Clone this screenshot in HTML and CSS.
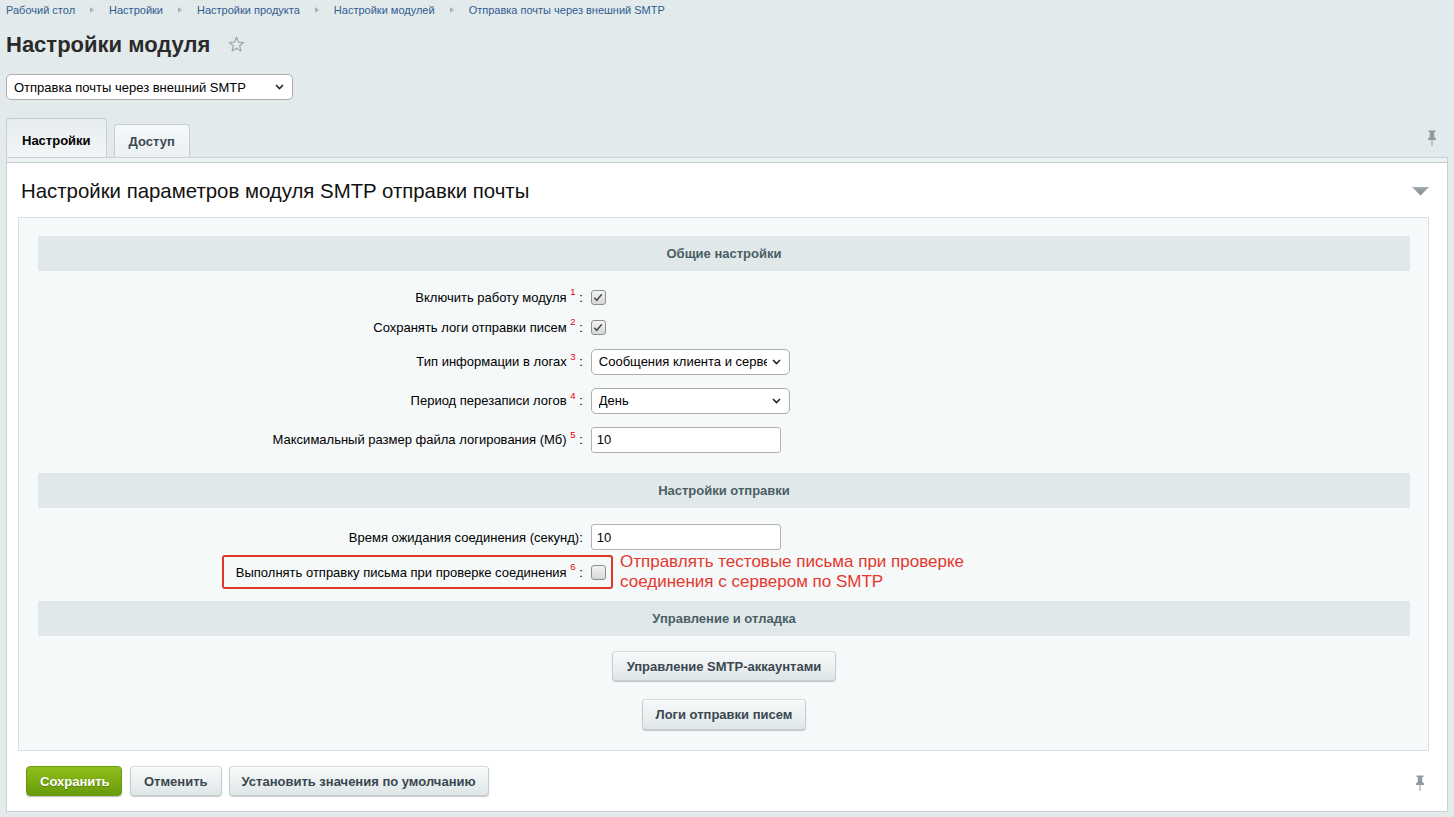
FILE: index.html
```html
<!DOCTYPE html>
<html lang="ru">
<head>
<meta charset="utf-8">
<title>Настройки модуля</title>
<link rel="stylesheet" href="styles.css">
</head>
<body>
<div class="page">
  <nav class="breadcrumbs">
    <a href="#">Рабочий стол</a><span class="crumb-sep"></span>
    <a href="#">Настройки</a><span class="crumb-sep"></span>
    <a href="#">Настройки продукта</a><span class="crumb-sep"></span>
    <a href="#">Настройки модулей</a><span class="crumb-sep"></span>
    <a href="#">Отправка почты через внешний SMTP</a>
  </nav>

  <h1 class="page-title">Настройки модуля
    <svg class="star" width="17" height="17" viewBox="0 0 17 17"><path d="M8.5 1.3 L10.5 6.1 L15.6 6.5 L11.7 9.8 L12.9 14.9 L8.5 12.2 L4.1 14.9 L5.3 9.8 L1.4 6.5 L6.5 6.1 Z" fill="none" stroke="#9ba6ab" stroke-width="1.2" stroke-linejoin="round"/></svg>
  </h1>

  <div class="module-select">
    <span class="select-wrap select-top">
      <select><option>Отправка почты через внешний SMTP</option></select>
      <svg class="chev" width="9" height="6" viewBox="0 0 9 6"><path d="M1 1 L4.5 4.6 L8 1" fill="none" stroke="#222" stroke-width="1.5"/></svg>
    </span>
  </div>

  <div class="tabs">
    <div class="tab tab-active">Настройки</div>
    <div class="tab">Доступ</div>
    <svg class="pin pin-top" width="10" height="16" viewBox="0 0 10 16"><path d="M1.5 0.5 H8.5 V2 H7.2 V7 L9 8.6 V10 H1 V8.6 L2.8 7 V2 H1.5 Z" fill="#8f9a9e"/><rect x="4.5" y="10" width="1" height="6" fill="#8f9a9e"/></svg>
  </div>

  <div class="panel">
    <div class="panel-strip"></div>
    <div class="panel-head">
      <h2>Настройки параметров модуля SMTP отправки почты</h2>
      <svg class="collapse" width="17" height="9" viewBox="0 0 17 9"><defs><linearGradient id="tg" x1="0" y1="0" x2="0" y2="1"><stop offset="0" stop-color="#a3adb1"/><stop offset="1" stop-color="#7d888c"/></linearGradient></defs><path d="M0 0 H17 L8.5 8.5 Z" fill="url(#tg)"/></svg>
    </div>

    <div class="inner">
      <div class="section-head">Общие настройки</div>
      <div class="section-body body-1">
        <div class="row row-cb">
          <div class="cell-l">Включить работу модуля <sup>1</sup> :</div>
          <div class="cell-r"><span class="cb checked"><svg width="10" height="9" viewBox="0 0 10 9"><path d="M1.2 4.8 L3.8 7.3 L8.8 1.3" fill="none" stroke="#4a4a4a" stroke-width="1.5"/></svg></span></div>
        </div>
        <div class="row row-cb">
          <div class="cell-l">Сохранять логи отправки писем <sup>2</sup> :</div>
          <div class="cell-r"><span class="cb checked"><svg width="10" height="9" viewBox="0 0 10 9"><path d="M1.2 4.8 L3.8 7.3 L8.8 1.3" fill="none" stroke="#4a4a4a" stroke-width="1.5"/></svg></span></div>
        </div>
        <div class="row row-field">
          <div class="cell-l">Тип информации в логах <sup>3</sup> :</div>
          <div class="cell-r">
            <span class="select-wrap select-field">
              <select><option>Сообщения клиента и сервера</option></select>
              <svg class="chev" width="9" height="6" viewBox="0 0 9 6"><path d="M1 1 L4.5 4.6 L8 1" fill="none" stroke="#222" stroke-width="1.5"/></svg>
            </span>
          </div>
        </div>
        <div class="row row-field">
          <div class="cell-l">Период перезаписи логов <sup>4</sup> :</div>
          <div class="cell-r">
            <span class="select-wrap select-field">
              <select><option>День</option></select>
              <svg class="chev" width="9" height="6" viewBox="0 0 9 6"><path d="M1 1 L4.5 4.6 L8 1" fill="none" stroke="#222" stroke-width="1.5"/></svg>
            </span>
          </div>
        </div>
        <div class="row row-field">
          <div class="cell-l">Максимальный размер файла логирования (Мб) <sup>5</sup> :</div>
          <div class="cell-r"><input class="text-input" type="text" value="10"></div>
        </div>
      </div>

      <div class="section-head">Настройки отправки</div>
      <div class="section-body body-2">
        <div class="row row-field2">
          <div class="cell-l">Время ожидания соединения (секунд):</div>
          <div class="cell-r"><input class="text-input" type="text" value="10"></div>
        </div>
        <div class="row row-note">
          <div class="cell-l">Выполнять отправку письма при проверке соединения <sup>6</sup> :</div>
          <div class="cell-r"><span class="cb"></span></div>
          <div class="note-box"></div>
          <div class="note-text">Отправлять тестовые письма при проверке<br>соединения с сервером по SMTP</div>
        </div>
      </div>

      <div class="section-head">Управление и отладка</div>
      <div class="section-body body-3">
        <button class="btn">Управление SMTP-аккаунтами</button>
        <button class="btn">Логи отправки писем</button>
      </div>
    </div>

    <div class="panel-foot">
      <button class="btn btn-save">Сохранить</button>
      <button class="btn">Отменить</button>
      <button class="btn">Установить значения по умолчанию</button>
      <svg class="pin pin-bottom" width="10" height="16" viewBox="0 0 10 16"><path d="M1.5 0.5 H8.5 V2 H7.2 V7 L9 8.6 V10 H1 V8.6 L2.8 7 V2 H1.5 Z" fill="#8f9a9e"/><rect x="4.5" y="10" width="1" height="6" fill="#8f9a9e"/></svg>
    </div>
  </div>
</div>
</body>
</html>
```

FILE: styles.css
```css
* { box-sizing: border-box; }

body {
  margin: 0;
  background: #e3eaec;
  font-family: "Liberation Sans", Arial, sans-serif;
  color: #000;
}

.page {
  padding: 0 6px 6px;
}

.breadcrumbs {
  height: 20px;
  display: flex;
  align-items: center;
  font-size: 11px;
}

.breadcrumbs a {
  color: #2e5d8f;
  text-decoration: none;
}

.crumb-sep {
  width: 0;
  height: 0;
  border-left: 4px solid #a9b4b8;
  border-top: 3.5px solid transparent;
  border-bottom: 3.5px solid transparent;
  margin: 0 15px 0 15px;
}

.page-title {
  margin: 13px 0 0;
  height: 24px;
  font-size: 22px;
  line-height: 24px;
  font-weight: bold;
  color: #2a2a2a;
  display: flex;
  align-items: center;
}

.star {
  margin-left: 18px;
  margin-top: -1px;
}

.module-select {
  margin-top: 17px;
  display: flex;
}

.select-wrap {
  position: relative;
  display: inline-block;
}

.select-wrap select {
  appearance: none;
  -webkit-appearance: none;
  display: block;
  background: #fff;
  border: 1px solid #adadad;
  border-radius: 5px;
  font-family: "Liberation Sans", Arial, sans-serif;
  color: #000;
  outline: none;
  margin: 0;
}

.select-wrap .chev {
  position: absolute;
  right: 9px;
  top: 10px;
  pointer-events: none;
}

.select-top select {
  width: 287px;
  height: 26px;
  font-size: 13px;
  padding: 0 22px 0 7px;
}

.select-field select {
  width: 199px;
  height: 26px;
  font-size: 13px;
  padding: 0 22px 0 7px;
}

.tabs {
  margin-top: 18px;
  height: 39px;
  display: flex;
  align-items: flex-end;
  position: relative;
}

.tab {
  height: 33px;
  padding: 0 14px;
  margin-left: 7px;
  display: flex;
  align-items: center;
  font-size: 13px;
  font-weight: bold;
  color: #3c4a52;
  background: linear-gradient(#f7f9fa, #eaeff1);
  border: 1px solid #c6cfd2;
  border-bottom: none;
  border-radius: 4px 4px 0 0;
}

.tab-active {
  height: 39px;
  margin-left: 0;
  padding: 4px 15px 0;
  color: #000;
  background: linear-gradient(#e6ecee, #f3f6f7);
}

.pin-top {
  position: absolute;
  right: 11px;
  top: 12px;
}

.panel {
  background: #fff;
  border: 1px solid #c9d1d4;
  height: 655px;
  display: flex;
  flex-direction: column;
}

.panel-strip {
  height: 5px;
  background: #eef2f4;
  border-bottom: 1px solid #c3ccd0;
}

.panel-head {
  height: 54px;
  display: flex;
  align-items: center;
  padding: 2px 18px 0 14px;
}

.panel-head h2 {
  margin: 0;
  font-size: 20.4px;
  font-weight: normal;
  color: #111;
  flex: 1;
}

.collapse {
  margin-top: 0;
}

.inner {
  margin: 0 18px 0 11px;
  background: #f5f9f9;
  border: 1px solid #d6dfe2;
  padding: 18px 18px 0 19px;
}

.section-head {
  height: 35px;
  background: #e0e8ea;
  display: flex;
  align-items: center;
  justify-content: center;
  font-size: 13px;
  font-weight: bold;
  color: #4a5f64;
}

.section-body {
  display: flex;
  flex-direction: column;
}

.body-1 {
  padding: 11px 0 14px;
}

.body-2 {
  padding: 12px 0 11px;
}

.body-3 {
  padding: 15px 0 20px;
  align-items: center;
  gap: 18px;
}

.row {
  display: flex;
  align-items: center;
  position: relative;
  font-size: 13px;
}

.row-cb { height: 30px; }
.row-field { height: 39px; }
.row-field2 { height: 34px; }
.row-note { height: 36px; }

.cell-l {
  width: 40%;
  text-align: right;
  padding-right: 4px;
  color: #000;
}

.cell-r {
  width: 60%;
  padding-left: 4px;
  display: flex;
  align-items: center;
}

sup {
  color: #e00;
  font-size: 9.5px;
  position: relative;
  top: -1px;
  vertical-align: super;
  line-height: 0;
}

.cb {
  width: 15px;
  height: 15px;
  border: 1px solid #8d8f91;
  border-radius: 3px;
  background: linear-gradient(#f4f4f4, #d5d7d8);
  display: inline-flex;
  align-items: center;
  justify-content: center;
}

.text-input {
  width: 190px;
  height: 26px;
  border: 1px solid #b1b1b1;
  border-radius: 3px;
  padding: 0 5px;
  font-size: 13px;
  font-family: "Liberation Sans", Arial, sans-serif;
  background: #fff;
  outline: none;
}

.note-box {
  position: absolute;
  left: 184px;
  top: 1px;
  width: 391px;
  height: 34px;
  border: 2px solid #e0362c;
  border-radius: 3px;
  pointer-events: none;
}

.note-text {
  position: absolute;
  left: 582px;
  top: -2px;
  font-size: 17px;
  line-height: 20px;
  color: #e5372d;
  white-space: nowrap;
}

.btn {
  height: 30px;
  padding: 0 14px;
  font-family: "Liberation Sans", Arial, sans-serif;
  font-size: 13px;
  font-weight: bold;
  color: #3a4750;
  background: linear-gradient(#f8fafa, #dfe6e8);
  border: 1px solid #c5cdd0;
  border-top-color: #d3dadc;
  border-radius: 4px;
  box-shadow: 0 1px 1px rgba(0, 0, 0, 0.22), inset 0 1px 0 #fff;
  cursor: pointer;
}

.body-3 .btn:last-child {
  height: 31px;
  padding: 0 13px;
}

.panel-foot {
  margin-top: auto;
  height: 60px;
  display: flex;
  align-items: center;
  gap: 7px;
  padding: 0 22px 0 19px;
}

.panel-foot .btn {
  padding: 0 13px;
}

.panel-foot .btn:nth-child(3) {
  padding: 0 12px;
}

.btn-save {
  width: 96px;
  color: #fff;
  background: linear-gradient(#90be1d, #679b0a);
  border: 1px solid #6a9a12;
  box-shadow: 0 1px 1px rgba(0, 0, 0, 0.25);
  text-shadow: 0 1px 1px rgba(0, 0, 0, 0.25);
  margin-right: 1px;
}

.pin-bottom {
  margin-left: auto;
  margin-top: 3px;
}
```
